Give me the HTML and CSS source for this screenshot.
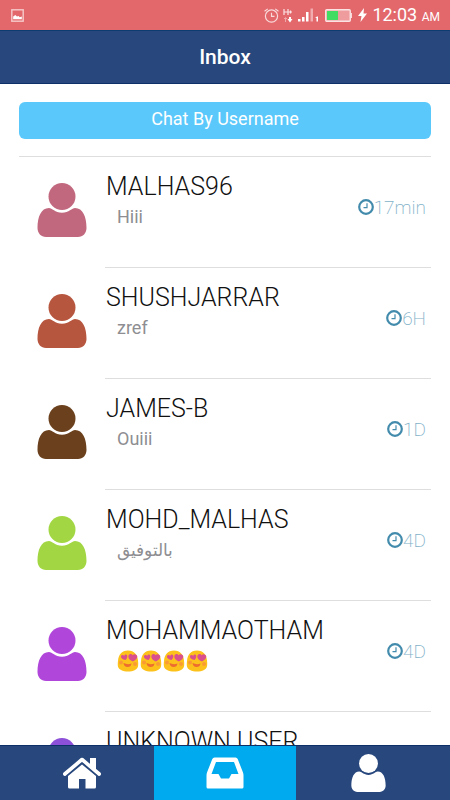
FILE: index.html
```html
<!DOCTYPE html>
<html lang="en">
<head>
<meta charset="utf-8">
<meta name="viewport" content="width=device-width, initial-scale=1">
<title>Inbox</title>
<link rel="stylesheet" href="styles.css">
</head>
<body>
<svg class="defs" aria-hidden="true">
  <symbol id="person" viewBox="0 0 50 54">
    <circle cx="25" cy="13.500" r="13.500"/>
    <path d="M12 25C15 25 18 29.700 25 29.700S35 25 38 25C46 25 49.500 34 49.500 45C49.500 50 46 54 41 54H9C4 54 .5 50 .5 45C.5 34 4 25 12 25Z"/>
  </symbol>
  <symbol id="clock" viewBox="0 0 16 16">
    <circle cx="8" cy="8" r="6.800" fill="none" stroke="currentColor" stroke-width="2.200"/>
    <path d="M9 4.300V8.600H5.500" fill="none" stroke="currentColor" stroke-width="1.200"/>
  </symbol>
  <symbol id="love" viewBox="0 0 22 22">
    <path fill="#fcc21b" d="M11 .5C17.500 .5 20.500 5 21 10.500C21.500 15 21.500 18.500 18 20C14 22 8 22 4 20C.5 18.500 .5 15 1 11C1.500 5 4.500 .5 11 .5Z"/>
    <path fill="#d9508c" d="M8.500 10C5.500 9.500 3.500 8 4 6C4.500 4.500 6.500 4.500 7.200 6C7.500 4 10 4 10.300 6C10.500 7.500 9.500 9 8.500 10ZM15.800 11.500C12.500 10 10.700 8 11.500 5.500C12.300 3.500 14.800 3.500 15.500 5.300C17 3.500 20.300 4.200 20.300 6.800C20 9.500 17.500 10.500 15.800 11.500Z"/>
    <path fill="#ed6c30" d="M6.500 13Q10.500 15 14.500 13.500Q14 17 10.500 17T6.500 13Z"/>
    <circle fill="#fa9a35" cx="4" cy="12.500" r="2"/><circle fill="#fa9a35" cx="18" cy="14" r="2"/>
  </symbol>
</svg>

<div class="status">
  <svg class="status-picture" viewBox="0 0 12 12" aria-label="Picture saved">
    <rect x=".75" y=".75" width="10.500" height="10.500" fill="none" stroke="#f7caca" stroke-width="1.300"/>
    <path d="M2 9.500V7L4 5.500L5.500 7L7 6.500L8 7.500L10 7V9.500Z" fill="#fff"/>
  </svg>
  <svg class="status-alarm" viewBox="0 0 14 14" aria-label="Alarm">
    <g fill="none" stroke="#f9dada" stroke-width="1.100"><circle cx="7" cy="7.500" r="5.700"/><path d="M7 4.500V7.800H9.800M.5 3L3.500 .8M13.500 3L10.500 .8"/></g>
  </svg>
  <svg class="status-data" viewBox="0 0 10 15" aria-label="H+ data">
    <path d="M1 1V7M5 1V7M1 4H9M7.500 2.500V5.500" fill="none" stroke="#fbe3e3" stroke-width="1.200"/>
    <path d="M2.500 14V10M1 11L2.500 9.500L4 11" fill="none" stroke="#f0a9aa"/>
    <path d="M6 9H8V11H9.500L7 14.500L4.500 11H6Z" fill="#fff"/>
  </svg>
  <svg class="status-signal" viewBox="0 0 21 14" aria-label="Signal">
    <g fill="#fff"><path d="M0 11H2.500V13.500H0ZM4 9H6.500V13.500H4ZM8 4H10.500V13.500H8Z"/><path opacity=".45" d="M12.500 .5H15V13.500H12.500Z"/><path d="M17.500 9.500L19 8.500H20V13.500H18.500V10H17.500Z"/></g>
  </svg>
  <svg class="status-battery" viewBox="0 0 27 13" aria-label="Battery">
    <path fill="#f9dada" d="M25 4H27V9H25Z"/><rect x=".75" y=".75" width="24.500" height="11.500" rx="1" fill="#ef9c9e" stroke="#fbe3e3" stroke-width="1.400"/>
    <path fill="#43dc62" d="M2 2H13V11H2Z"/>
  </svg>
  <svg class="status-bolt" viewBox="0 0 9 14" aria-label="Charging"><path fill="#fff" d="M6 0L0 8H3.500L2.500 14L9 5.500H5.500Z"/></svg>
  <span class="status-time">12:03 <small>AM</small></span>
</div>

<header class="header"><h1>Inbox</h1></header>

<main class="content">
  <button class="chat-button" type="button">Chat By Username</button>
  <ul class="list">
    <li class="item"><svg class="avatar rose"><use href="#person"/></svg>
      <div class="body"><div class="text"><h2>MALHAS96</h2><p>Hiii</p></div><span class="time"><svg><use href="#clock"/></svg>17min</span></div></li>
    <li class="item"><svg class="avatar rust"><use href="#person"/></svg>
      <div class="body"><div class="text"><h2>SHUSHJARRAR</h2><p>zref</p></div><span class="time"><svg><use href="#clock"/></svg>6H</span></div></li>
    <li class="item"><svg class="avatar brown"><use href="#person"/></svg>
      <div class="body"><div class="text"><h2>JAMES-B</h2><p>Ouiii</p></div><span class="time"><svg><use href="#clock"/></svg>1D</span></div></li>
    <li class="item"><svg class="avatar lime"><use href="#person"/></svg>
      <div class="body"><div class="text"><h2>MOHD_MALHAS</h2><p lang="ar">بالتوفيق</p></div><span class="time"><svg><use href="#clock"/></svg>4D</span></div></li>
    <li class="item"><svg class="avatar purple"><use href="#person"/></svg>
      <div class="body"><div class="text"><h2>MOHAMMAOTHAM</h2><p class="emoji"><svg><use href="#love"/></svg><svg><use href="#love"/></svg><svg><use href="#love"/></svg><svg><use href="#love"/></svg></p></div><span class="time"><svg><use href="#clock"/></svg>4D</span></div></li>
    <li class="item"><svg class="avatar violet"><use href="#person"/></svg>
      <div class="body"><div class="text"><h2>UNKNOWN USER</h2></div></div></li>
  </ul>
</main>

<nav class="tabs">
  <a href="#home" aria-label="Home"><svg class="tab-home" viewBox="0 0 38 32">
    <path d="M1.800 17L19 2.500L36.200 17" fill="none" stroke="#fff" stroke-width="3.600" stroke-linejoin="round" stroke-linecap="round"/>
    <path d="M27 1H33V13L27 8ZM5 19L19 7.500L33 19V30Q33 31.500 31.500 31.500H22.500V22H16V31.500H6.500Q5 31.500 5 30Z" fill="#fff"/>
    <path d="M4.500 18.300L19 6L33.500 18.300" fill="none" stroke="#28487d" stroke-width="1"/></svg></a>
  <a class="active" href="#inbox" aria-label="Inbox" aria-current="page"><svg class="tab-inbox" viewBox="0 0 38 32">
    <path fill="#fff" fill-rule="evenodd" d="M8.500 .5H29.500Q31 .5 31.700 2L37 15.500Q37.500 17 37.500 18.500V30Q37.500 31.500 36 31.500H2Q.5 31.500 .5 30V18.500Q.5 17 1 15.500L6.300 2Q7 .5 8.500 .5ZM10 5L5.500 17H12.500L15 21.500H23L25.500 17H32.500L28 5Z"/></svg></a>
  <a href="#profile" aria-label="Profile"><svg class="tab-person"><use href="#person"/></svg></a>
</nav>
</body>
</html>
```
FILE: styles.css
```css
* { box-sizing: border-box; }
html, body { height: 100%; }
body {
  margin: 0;
  display: flex;
  flex-direction: column;
  overflow: hidden;
  background: #fff;
  font-family: Roboto, "Noto Sans", sans-serif;
}
h1, h2, p, ul { margin: 0; padding: 0; }
svg { display: block; flex: none; }
.defs { position: absolute; width: 0; height: 0; }

.status {
  flex: none;
  display: flex;
  align-items: center;
  height: 30px;
  padding: 0 10px 0 11px;
  background: #e3686c;
  color: #fff;
}
.status-picture { width: 13px; height: 13px; margin-right: auto; }
.status-alarm { width: 15px; height: 15px; margin-right: 4px; }
.status-data { width: 10px; height: 15px; margin-right: 5px; }
.status-signal { width: 21px; height: 14px; margin-right: 6px; }
.status-battery { width: 27px; height: 13px; margin-right: 6px; }
.status-bolt { width: 9px; height: 14px; margin-right: 5px; }
.status-time { padding-top: 2px; font-size: 18px; line-height: 28px; white-space: nowrap; }
.status-time small { font-size: 12px; }

.header {
  flex: none;
  height: 54px;
  background: #28487d;
  border-top: 1px solid #0e3b70;
  border-bottom: 1px solid #0e3068;
  color: #fff;
  text-align: center;
}
.header h1 { font-size: 21px; font-weight: 500; line-height: 52px; }

.content { flex: 1; min-height: 0; overflow: hidden; padding: 18px 19px 0; }
.chat-button {
  display: block;
  width: 100%;
  height: 37px;
  padding: 0 0 3px;
  border: 0;
  border-radius: 6px;
  background: #5ac8fb;
  color: #fff;
  font: 400 18px/34px Roboto, sans-serif;
}
.list { margin-top: 17px; border-top: 1px solid #dedede; list-style: none; }
.item { display: flex; height: 111px; }
.avatar { width: 50px; height: 54px; margin: 26px 18px 0; fill: currentColor; }
.rose { color: #c1687e; }
.rust { color: #b7563f; }
.brown { color: #6b401c; }
.lime { color: #a2d743; }
.purple { color: #b046da; }
.violet { color: #8d50d8; }
.body {
  flex: 1;
  display: flex;
  justify-content: space-between;
  padding: 14px 5px 0 1px;
  border-bottom: 1px solid #dedede;
}
.text h2 { font-size: 25px; font-weight: 300; line-height: 32px; color: #111; white-space: nowrap; }
.text p { padding-left: 11px; font-size: 18px; line-height: 28px; color: #8e8e92; }
.text p:lang(ar) { font-size: 17px; }
.text .emoji { display: flex; gap: 1px; padding-top: 3px; }
.emoji svg { width: 22px; height: 22px; }
.time {
  display: flex;
  align-items: center;
  height: 24px;
  margin-top: 24px;
  font-size: 19px;
  font-weight: 200;
  color: #7fb1c8;
}
.time svg { width: 16px; height: 16px; color: #438bac; }

.tabs {
  flex: none;
  display: grid;
  grid-template-columns: 154fr 142fr 154fr;
  height: 55px;
  border-top: 1px solid #0e3068;
  background: #28487d;
}
.tabs a { display: flex; align-items: center; justify-content: center; color: #fff; }
.tabs .active { background: #00aaef; }
.tab-home, .tab-inbox { width: 38px; height: 32px; }
.tabs .tab-person { width: 35px; height: 38px; fill: currentColor; }
.tabs a:first-child { padding-left: 10px; }
.tabs a:last-child { padding-right: 10px; }
```
